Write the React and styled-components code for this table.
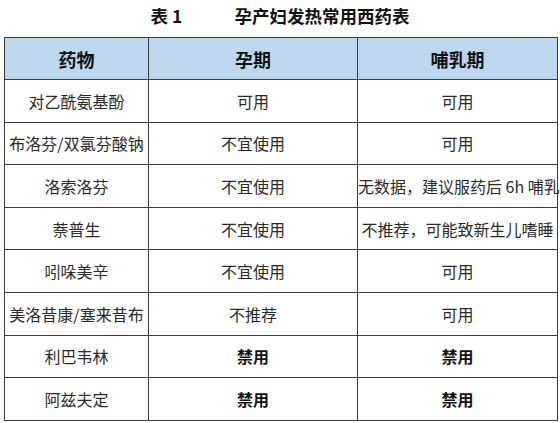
import React from "react";
import styled, { createGlobalStyle } from "styled-components";

const GlobalStyle = createGlobalStyle`
  body {
    margin: 0;
    background: #ffffff;
    font-family: "Noto Sans CJK SC", "Noto Sans", sans-serif;
    color: #222222;
  }
`;

const Page = styled.div`
  width: 560px;
  height: 423px;
  overflow: hidden;
`;

const Title = styled.h1`
  margin: 0 0 7px;
  height: 30px;
  display: flex;
  align-items: center;
  justify-content: center;
  font-size: 17.5px;
  font-weight: 700;
  color: #111111;
`;

const TitleNo = styled.span`
  margin-right: 52px;
`;

const Table = styled.table`
  margin-left: 4px;
  width: 553px;
  border-collapse: collapse;
  table-layout: fixed;
`;

const HeadCell = styled.th`
  height: 41px;
  padding: 0;
  background: #bdd7ee;
  border: 1px solid #3c3c3c;
  font-size: 18px;
  font-weight: 700;
  color: #111111;
  text-align: center;
`;

const Cell = styled.td`
  height: 41.6px;
  padding: 0;
  border: 1px solid #3c3c3c;
  font-size: 16px;
  font-weight: ${(p) => (p.$bold ? 700 : 400)};
  color: ${(p) => (p.$bold ? "#111111" : "#2a2a2a")};
  text-align: center;
  white-space: nowrap;
  overflow: visible;
`;

const rows = [
  ["对乙酰氨基酚", "可用", "可用"],
  ["布洛芬/双氯芬酸钠", "不宜使用", "可用"],
  ["洛索洛芬", "不宜使用", "无数据，建议服药后 6h 哺乳"],
  ["萘普生", "不宜使用", "不推荐，可能致新生儿嗜睡"],
  ["吲哚美辛", "不宜使用", "可用"],
  ["美洛昔康/塞来昔布", "不推荐", "可用"],
  ["利巴韦林", "禁用", "禁用", true],
  ["阿兹夫定", "禁用", "禁用", true],
];

export default function App() {
  return (
    <Page>
      <GlobalStyle />
      <Title>
        <TitleNo>表 1</TitleNo>
        孕产妇发热常用西药表
      </Title>
      <Table>
        <colgroup>
          <col style={{ width: 144 }} />
          <col style={{ width: 209 }} />
          <col style={{ width: 200 }} />
        </colgroup>
        <thead>
          <tr>
            <HeadCell>药物</HeadCell>
            <HeadCell>孕期</HeadCell>
            <HeadCell>哺乳期</HeadCell>
          </tr>
        </thead>
        <tbody>
          {rows.map(([drug, preg, lact, bold]) => (
            <tr key={drug}>
              <Cell>{drug}</Cell>
              <Cell $bold={bold}>{preg}</Cell>
              <Cell $bold={bold}>{lact}</Cell>
            </tr>
          ))}
        </tbody>
      </Table>
    </Page>
  );
}
